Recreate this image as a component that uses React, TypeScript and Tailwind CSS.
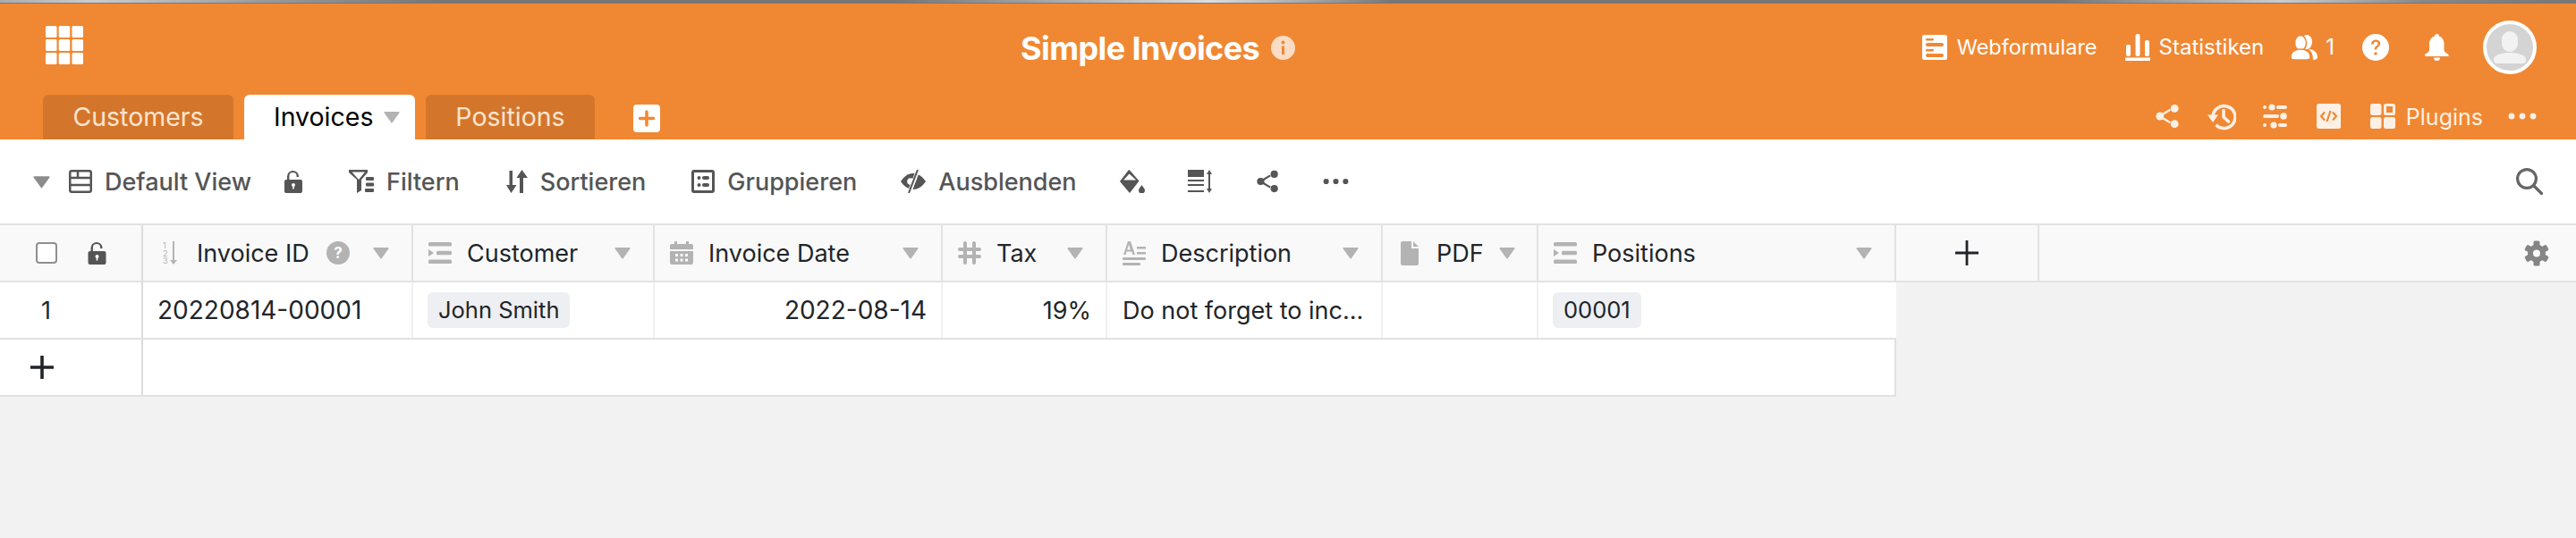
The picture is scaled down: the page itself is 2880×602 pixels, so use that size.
// App.tsx
// Simple Invoices base view: orange header, toolbar and a single small table.
import type { ReactNode } from "react";

const FONT = "font-['Inter','Noto_Sans',sans-serif]";

type IconProps = { className?: string };

function Tri({ className = "w-[18px] h-[14px] fill-[#b3b3b3]" }: IconProps) {
  return (
    <svg viewBox="0 0 18 14" className={className}>
      <path d="M1.5 1h15a1 1 0 0 1 .8 1.5L9.8 13a1 1 0 0 1-1.6 0L.7 2.5A1 1 0 0 1 1.5 1z" />
    </svg>
  );
}

function Share({ className }: IconProps) {
  return (
    <svg viewBox="0 0 28 28" className={className}>
      <circle cx="5" cy="14" r="4.6" fill="currentColor" />
      <circle cx="22" cy="5" r="4.6" fill="currentColor" />
      <circle cx="22" cy="23" r="4.6" fill="currentColor" />
      <path d="M8 12l9-5.5M8 16l9 5.5" stroke="currentColor" strokeWidth="2.4" fill="none" />
    </svg>
  );
}

function Dots({ className }: IconProps) {
  return (
    <svg viewBox="0 0 32 8" className={className}>
      <circle cx="4" cy="4" r="3.4" fill="currentColor" />
      <circle cx="16" cy="4" r="3.4" fill="currentColor" />
      <circle cx="28" cy="4" r="3.4" fill="currentColor" />
    </svg>
  );
}

function Lock({ className }: IconProps) {
  return (
    <svg viewBox="0 0 20 26" className={className}>
      <path d="M3 8a6.5 6.5 0 0 1 13-1v1h-2.400V7a4.100 4.100 0 0 0-8.200 0v4H18a2 2 0 0 1 2 2v11a2 2 0 0 1-2 2H2a2 2 0 0 1-2-2V13a2 2 0 0 1 2-2h1z" fill="currentColor" />
      <circle cx="10" cy="17" r="2" fill="#fff" />
      <rect x="9.200" y="17" width="1.600" height="4.500" fill="#fff" />
    </svg>
  );
}

function ListLink({ className }: IconProps) {
  return (
    <svg viewBox="0 0 26 24" className={className} fill="currentColor">
      <rect x="0" y="0" width="26" height="4.500" rx="1.500" />
      <path d="M0 8l6 4-6 4z" />
      <rect x="9" y="9.800" width="17" height="4.500" rx="1.500" />
      <rect x="0" y="19.500" width="26" height="4.500" rx="1.500" />
    </svg>
  );
}

function HeaderCell({
  width,
  icon,
  label,
  triLeft,
}: {
  width: string;
  icon: ReactNode;
  label: string;
  triLeft?: boolean;
}) {
  return (
    <div className={`${width} shrink-0 h-full flex items-center pl-[17px] pr-[25px] border-r-2 border-[#e2e2e2]`}>
      <span className="w-[26px] h-[26px] flex items-center justify-center text-[#b3b3b3] shrink-0">{icon}</span>
      <span className="ml-[17px] whitespace-nowrap">{label}</span>
      <span className={triLeft ? "ml-[17px]" : "ml-auto"}>
        <Tri />
      </span>
    </div>
  );
}

function Pill({ children }: { children: ReactNode }) {
  return (
    <span className="h-10 px-3 flex items-center rounded-[6px] bg-[#eeeff3] whitespace-nowrap text-[25.5px]">{children}</span>
  );
}

function ToolButton({ icon, label, className }: { icon: ReactNode; label: string; className: string }) {
  return (
    <div className={`flex items-center gap-[14px] whitespace-nowrap ${className}`}>
      {icon}
      <span>{label}</span>
    </div>
  );
}

const GEAR_TEETH = [0, 60, 120, 180, 240, 300];

export default function App() {
  return (
    <div className={`${FONT} w-[2880px] h-[602px] overflow-hidden bg-[#f2f2f2] text-[27px] leading-none`}>
      {/* Franja superior y cabecera naranja */}
      <div className="h-1 border-b border-[#777777] bg-[linear-gradient(90deg,#aaaaaa_0%,#cccccc_3.5%,#999999_10.4%,#777777_17%,#777777_35%,#dddddd_47%,#777777_54%,#777777_80%,#cccccc_88.5%,#888888_94%,#777777_100%)]" />
      <div className="h-[152px] bg-[#f08833] flex flex-col text-white">
        <div className="h-[102px] flex items-start">
          <div className="w-[1141px] shrink-0 pl-[51px] pt-[25px]">
            <svg viewBox="0 0 42 43" className="w-[42px] h-[43px]" fill="#fff">
              <rect x="0" y="0" width="12.500" height="13" rx="1.500" />
              <rect x="14.700" y="0" width="12.500" height="13" rx="1.500" />
              <rect x="29.500" y="0" width="12.500" height="13" rx="1.500" />
              <rect x="0" y="15" width="12.500" height="13" rx="1.500" />
              <rect x="14.700" y="15" width="12.500" height="13" rx="1.500" />
              <rect x="29.500" y="15" width="12.500" height="13" rx="1.500" />
              <rect x="0" y="30" width="12.500" height="13" rx="1.500" />
              <rect x="14.700" y="30" width="12.500" height="13" rx="1.500" />
              <rect x="29.500" y="30" width="12.500" height="13" rx="1.500" />
            </svg>
          </div>
          <div className="flex items-center h-[27px] mt-[36px] gap-[13px]">
            <span className="text-[36px] font-bold tracking-[-0.6px] whitespace-nowrap">Simple Invoices</span>
            <svg viewBox="0 0 27 27" className="w-[27px] h-[27px]">
              <circle cx="13.500" cy="13.500" r="13.500" fill="#fbdcc4" />
              <circle cx="13.500" cy="7.500" r="2" fill="#f08833" />
              <rect x="12" y="11.500" width="3" height="9.500" fill="#f08833" />
            </svg>
          </div>
          <div className="ml-auto pr-[44px] pt-[19px] flex items-center h-[79px] text-[24px]">
            <svg viewBox="0 0 28 28" className="w-7 h-7">
              <rect width="28" height="28" rx="2.500" fill="#fff" />
              <rect x="4" y="4" width="9" height="2.500" rx="1" fill="#f08833" />
              <rect x="4" y="9" width="20" height="4" rx="2" fill="#f08833" />
              <rect x="4" y="16" width="9" height="2.500" rx="1" fill="#f08833" />
              <rect x="4" y="21" width="20" height="4" rx="2" fill="#f08833" />
            </svg>
            <span className="ml-[11px] text-[23.5px]">Webformulare</span>
            <svg viewBox="0 0 28 30" className="ml-[31px] w-7 h-[30px]" fill="#fff">
              <rect x="1" y="12" width="5" height="13" rx="2" />
              <rect x="11.500" y="0" width="5" height="25" rx="2" />
              <rect x="22" y="7" width="5" height="18" rx="2" />
              <rect x="0" y="26.500" width="28" height="3.500" />
            </svg>
            <span className="ml-[10px]">Statistiken</span>
            <svg viewBox="0 0 30 28" className="ml-[30px] w-[30px] h-7" fill="#fff">
              <ellipse cx="18" cy="8" rx="6" ry="8" />
              <path d="M20 16c6 0 10 4 10 9 0 2-2 3-5 3 0-5-1-9-5-12z" />
              <ellipse cx="11" cy="9" rx="6.500" ry="8.500" stroke="#f08833" strokeWidth="1.500" />
              <path d="M0 25c0-6 5-9 11-9s11 3 11 9c0 2-2 3-4 3H4c-2 0-4-1-4-3z" stroke="#f08833" strokeWidth="1.500" />
            </svg>
            <span className="ml-[9px]">1</span>
            <svg viewBox="0 0 30 30" className="ml-[31px] w-[30px] h-[30px]">
              <circle cx="15" cy="15" r="15" fill="#fff" />
              <path d="M10 11.500c0-3 2.200-5 5.200-5 3 0 5 1.800 5 4.300 0 3.500-4 3.700-4 6.700h-2.600c0-4 4-4.500 4-6.700 0-1.200-1-2-2.400-2-1.500 0-2.400 1-2.500 2.700z" fill="#f08833" />
              <circle cx="15" cy="22" r="1.800" fill="#f08833" />
            </svg>
            <svg viewBox="0 0 27 30" className="ml-[40px] w-[27px] h-[30px]" fill="#fff">
              <circle cx="13.500" cy="2.500" r="2.500" />
              <path d="M13.500 2c5 0 8 4 8 9v7c0 2 2.500 3.500 5 5v2H0v-2c2.500-1.500 5-3 5-5v-7c0-5 3.500-9 8.500-9z" />
              <path d="M10 26.500h7a3.500 3.500 0 0 1-7 0z" />
            </svg>
            <div className="ml-[38px] w-[60px] h-[60px] rounded-full bg-[#d4d4d4] border-[4px] border-white overflow-hidden flex items-center justify-center">
              <svg viewBox="0 0 52 52" className="w-[52px] h-[52px]" fill="#f2f2f2">
                <rect x="17" y="8" width="18" height="23" rx="9" />
                <path d="M8 39c0-4 8-7 18-7s18 3 18 7v2c0 2-2 3-4 3H12c-2 0-4-1-4-3z" />
              </svg>
            </div>
          </div>
        </div>
        <div className="h-[50px] flex items-stretch">
          <div className="ml-[48px] w-[213px] rounded-t-[6px] bg-[#d3762b] text-[#fce4d0] text-[28.5px] flex items-center justify-center">Customers</div>
          <div className="ml-3 w-[191px] rounded-t-[6px] bg-white text-black text-[28.5px] flex items-center pl-[33px] gap-[12px]">
            Invoices
            <Tri />
          </div>
          <div className="ml-3 w-[189px] rounded-t-[6px] bg-[#d3762b] text-[#fce4d0] text-[28.5px] flex items-center justify-center">Positions</div>
          <div className="ml-[43px] mt-[11px] w-[30px] h-[31px] rounded-[4px] bg-white shrink-0">
            <svg viewBox="0 0 30 31" className="w-[30px] h-[31px]">
              <path d="M15 8v15M7.500 15.500h15" stroke="#f08833" strokeWidth="3.500" strokeLinecap="round" />
            </svg>
          </div>
          <div className="ml-auto pr-[44px] flex items-start pt-[10px] text-[#fdf0e5]">
            <Share className="w-[27px] h-7" />
            <svg viewBox="0 0 32 30" className="ml-[31px] w-8 h-[30px]" fill="none" stroke="currentColor" strokeWidth="3.600">
              <path d="M6 15a12.500 12.500 0 1 1 3.500 8.700" />
              <path d="M0 12.500h12L6 21z" fill="currentColor" stroke="none" />
              <path d="M18 7.500V15l5.500 5" strokeLinecap="round" />
            </svg>
            <svg viewBox="0 0 27 28" className="ml-[30px] w-[27px] h-7" fill="currentColor">
              <circle cx="2" cy="4" r="2" />
              <circle cx="10" cy="4" r="3.600" />
              <rect x="15" y="2" width="12" height="4" rx="2" />
              <rect x="0" y="12" width="18" height="4" rx="2" />
              <circle cx="23" cy="14" r="3.800" />
              <circle cx="2" cy="24" r="2" />
              <circle cx="12" cy="24" r="3.600" />
              <rect x="17" y="22" width="10" height="4" rx="2" />
            </svg>
            <svg viewBox="0 0 27 28" className="ml-[33px] w-[27px] h-7">
              <rect width="27" height="28" rx="2.500" fill="currentColor" />
              <path d="M9 9.500l-4 4.500 4 4.500M18 9.500l4 4.500-4 4.500M15.500 8l-4 12" stroke="#f08833" strokeWidth="2.200" fill="none" />
            </svg>
            <svg viewBox="0 0 28 28" className="ml-[33px] w-7 h-7" fill="currentColor">
              <rect x="0" y="0" width="12.500" height="13" rx="2.500" />
              <rect x="16.500" y="1.500" width="10" height="10" rx="1" fill="none" stroke="currentColor" strokeWidth="3" />
              <rect x="0" y="15" width="12.500" height="13" rx="2.500" />
              <rect x="15" y="15" width="13" height="13" rx="2.500" />
            </svg>
            <span className="ml-[12px] text-[25px] leading-[30px]">Plugins</span>
            <Dots className="ml-7 mt-[10px] w-8 h-2" />
          </div>
        </div>
      </div>

      {/* Barra de herramientas */}
      <div className="h-[94px] bg-white flex items-center text-[#555555] font-medium">
        <Tri className="ml-[37px] w-[19px] h-[15px] fill-[#8c8c8c]" />
        <ToolButton
          className="ml-[21px]"
          label="Default View"
          icon={
            <svg viewBox="0 0 26 26" className="w-[26px] h-[26px]" fill="none" stroke="currentColor" strokeWidth="2.500">
              <rect x="1.250" y="1.250" width="23.500" height="23.500" rx="2" />
              <path d="M1 9h24M1 17h24M10 1v8" />
            </svg>
          }
        />
        <Lock className="ml-[37px] w-5 h-[26px] text-[#555555]" />
        <ToolButton
          className="ml-[52px]"
          label="Filtern"
          icon={
            <svg viewBox="0 0 28 26" className="w-7 h-[26px]" fill="currentColor">
              <path d="M0 0h21v3l-7 8v12l-5 3V11L0 3zM3.500 2.500l7.500 8.500 7-8.500z" fillRule="evenodd" />
              <rect x="19" y="8" width="9" height="4" rx="1" />
              <rect x="19" y="14.500" width="9" height="4" rx="1" />
              <rect x="18" y="21" width="10" height="4" rx="1" />
            </svg>
          }
        />
        <ToolButton
          className="ml-[52px]"
          label="Sortieren"
          icon={
            <svg viewBox="0 0 24 26" className="w-6 h-[26px]" fill="currentColor">
              <path d="M3.500 1h3.500v16h4.500L5.500 26 0 17h3.500zM15 26h4V9h5L17.500 0 11.500 9H15z" />
            </svg>
          }
        />
        <ToolButton
          className="ml-[51px]"
          label="Gruppieren"
          icon={
            <svg viewBox="0 0 26 26" className="w-[26px] h-[26px]" fill="currentColor">
              <path d="M3 0h20a3 3 0 0 1 3 3v20a3 3 0 0 1-3 3H3a3 3 0 0 1-3-3V3a3 3 0 0 1 3-3zm0 3v20h20V3z" fillRule="evenodd" />
              <circle cx="8.500" cy="9" r="2" />
              <circle cx="8.500" cy="17" r="2" />
              <rect x="12" y="7" width="8" height="4" rx="2" />
              <rect x="12" y="15" width="8" height="4" rx="2" />
            </svg>
          }
        />
        <ToolButton
          className="ml-[49px]"
          label="Ausblenden"
          icon={
            <svg viewBox="0 0 28 26" className="w-7 h-[26px]">
              <path d="M0 13C4 7 9 4 14 4s10 3 14 9c-4 6-9 9-14 9S4 19 0 13z" fill="currentColor" />
              <circle cx="11" cy="13" r="3.800" fill="#fff" />
              <path d="M19.500 0L9.500 26" stroke="#fff" strokeWidth="4.500" />
              <path d="M19 0L9 26" stroke="currentColor" strokeWidth="2" />
            </svg>
          }
        />
        <svg viewBox="0 0 28 26" className="ml-[48px] w-7 h-[26px]" fill="currentColor">
          <path d="M10 0l1.500 1 10 11.500-10.500 13.500L0 13zM10.500 4.500L4.200 11.500h14z" fillRule="evenodd" />
          <path d="M24.500 17c1.500 2.500 3.500 4 3.500 6a3.500 3.500 0 0 1-7 0c0-2 2-3.500 3.500-6z" />
        </svg>
        <svg viewBox="0 0 27 26" className="ml-[48px] w-[27px] h-[26px]" fill="currentColor">
          <rect x="0" y="0" width="18" height="8" />
          <rect x="0" y="11" width="18" height="2" />
          <rect x="0" y="16" width="18" height="2" />
          <rect x="0" y="23" width="18" height="2" />
          <path d="M24 0l3 5h-2v16h2l-3 5-3-5h2V5h-2z" />
        </svg>
        <Share className="ml-[50px] w-[25px] h-[26px]" />
        <Dots className="ml-[49px] w-[29px] h-2" />
        <svg viewBox="0 0 30 30" className="ml-auto mr-[37px] w-[30px] h-[30px]" fill="none" stroke="#666666" strokeWidth="3.200" strokeLinecap="round">
          <circle cx="12" cy="12" r="10.400" />
          <path d="M20 20l8.500 8.500" />
        </svg>
      </div>

      {/* Tabla: fila de encabezados */}
      <div className="h-[66px] flex items-stretch bg-[#f9f9f9] border-y-2 border-[#e2e2e2] w-full text-[#212529]">
        <div className="w-[160px] shrink-0 flex items-center border-r-2 border-[#dcdcdc] pl-10">
          <div className="w-6 h-6 rounded-[4px] border-2 border-[#8f8f8f] bg-white" />
          <Lock className="ml-[34px] w-[21px] h-[26px] text-[#555555]" />
        </div>
        <div className="w-[302px] shrink-0 h-full flex items-center pl-[22px] pr-[25px] border-r-2 border-[#e2e2e2]">
          <svg viewBox="0 0 16 26" className="w-4 h-[26px] text-[#b3b3b3] shrink-0" fill="currentColor">
            <text x="0" y="8" fontSize="9">1</text>
            <text x="0" y="16.500" fontSize="9">2</text>
            <text x="0" y="25" fontSize="9">3</text>
            <path d="M11 0h2v21h3l-4 5-4-5h3z" />
          </svg>
          <span className="ml-[22px] whitespace-nowrap">Invoice ID</span>
          <svg viewBox="0 0 26 26" className="ml-[19px] w-[26px] h-[26px]">
            <circle cx="13" cy="13" r="13" fill="#b3b3b3" />
            <text x="13" y="19" textAnchor="middle" fontSize="17" fontWeight="700" fill="#fff">?</text>
          </svg>
          <span className="ml-auto"><Tri /></span>
        </div>
        <HeaderCell width="w-[270px]" label="Customer" icon={<ListLink className="w-[26px] h-6" />} />
        <HeaderCell
          width="w-[322px]"
          label="Invoice Date"
          icon={
            <svg viewBox="0 0 26 26" className="w-[26px] h-[26px]" fill="currentColor">
              <path d="M5 0h3v3h10V0h3v3h3a2 2 0 0 1 2 2v4H0V5a2 2 0 0 1 2-2h3z" />
              <path d="M0 11h26v13a2 2 0 0 1-2 2H2a2 2 0 0 1-2-2zM6 14v3h3v-3zm5.500 0v3h3v-3zm5.500 0v3h3v-3zM6 19.500v3h3v-3zm5.500 0v3h3v-3zm5.500 0v3h3v-3z" fillRule="evenodd" />
            </svg>
          }
        />
        <HeaderCell
          width="w-[184px]"
          label="Tax"
          icon={
            <svg viewBox="0 0 26 26" className="w-[26px] h-[26px]" fill="none" stroke="currentColor" strokeWidth="4" strokeLinecap="round">
              <path d="M8 2v22M18 2v22M2 9h22M2 17h22" />
            </svg>
          }
        />
        <HeaderCell
          width="w-[308px]"
          label="Description"
          icon={
            <svg viewBox="0 0 26 27" className="w-[26px] h-[27px]" fill="currentColor">
              <path d="M6 0h3l5 15h-2.600l-1-3.500H4.500L3.500 15H1zM5.200 9.500h3.600L7 3.500z" fillRule="evenodd" />
              <rect x="16" y="6" width="10" height="2.500" />
              <rect x="16" y="12" width="10" height="2.500" />
              <rect x="0" y="18" width="26" height="3" rx="1" />
              <rect x="0" y="24" width="20" height="3" rx="1" />
            </svg>
          }
        />
        <HeaderCell
          width="w-[174px]"
          label="PDF"
          triLeft
          icon={
            <svg viewBox="0 0 20 27" className="w-5 h-[27px]" fill="currentColor">
              <path d="M2 0h10v8h8v17a2 2 0 0 1-2 2H2a2 2 0 0 1-2-2V2a2 2 0 0 1 2-2zM14 0l6 6h-6z" />
            </svg>
          }
        />
        <HeaderCell width="w-[400px]" label="Positions" icon={<ListLink className="w-[26px] h-6" />} />
        <div className="w-[160px] shrink-0 flex items-center justify-center border-r-2 border-[#e2e2e2]">
          <svg viewBox="0 0 26 28" className="w-[26px] h-7" stroke="#212529" strokeWidth="2.800">
            <path d="M13 0v28M0 14h26" />
          </svg>
        </div>
        <div className="flex-1 flex items-center justify-end pr-[30px]">
          <svg viewBox="0 0 28 29" className="w-7 h-[29px]" fill="#858585">
            {GEAR_TEETH.map((deg) => (
              <rect key={deg} x="10.500" y="0.500" width="7" height="7" rx="1.500" transform={`rotate(${deg} 14 14.500)`} />
            ))}
            <circle cx="14" cy="14.500" r="10" />
            <circle cx="14" cy="14.500" r="4" fill="#f9f9f9" />
          </svg>
        </div>
      </div>

      {/* Fila de datos */}
      <div className="h-[64px] w-[2120px] flex items-stretch bg-white border-b-2 border-[#e2e2e2] text-[#212529]">
        <div className="w-[160px] shrink-0 flex items-center border-r-2 border-[#dcdcdc] pl-[46px]">1</div>
        <div className="w-[302px] shrink-0 flex items-center pl-[16px] border-r-2 border-[#f0f0f0] whitespace-nowrap text-[28px]">20220814-00001</div>
        <div className="w-[270px] shrink-0 flex items-center pl-[16px] border-r-2 border-[#f0f0f0]"><Pill>John Smith</Pill></div>
        <div className="w-[322px] shrink-0 flex items-center justify-end pr-[16px] border-r-2 border-[#f0f0f0] text-[28px]">2022-08-14</div>
        <div className="w-[184px] shrink-0 flex items-center justify-end pr-[16px] border-r-2 border-[#f0f0f0]">19%</div>
        <div className="w-[308px] shrink-0 flex items-center pl-[17px] border-r-2 border-[#f0f0f0] whitespace-nowrap">Do not forget to inc...</div>
        <div className="w-[174px] shrink-0 border-r-2 border-[#f0f0f0]" />
        <div className="w-[400px] shrink-0 flex items-center pl-[16px]"><Pill>00001</Pill></div>
      </div>

      {/* Fila para agregar */}
      <div className="h-[64px] w-[2120px] flex items-stretch bg-white border-b-2 border-r-2 border-[#e2e2e2] text-[#212529]">
        <div className="w-[160px] shrink-0 flex items-center border-r-2 border-[#dcdcdc] pl-[34px]">
          <svg viewBox="0 0 26 26" className="w-[26px] h-[26px]" stroke="#212529" strokeWidth="3.600">
            <path d="M13 0v26M0 13h26" />
          </svg>
        </div>
      </div>
    </div>
  );
}
